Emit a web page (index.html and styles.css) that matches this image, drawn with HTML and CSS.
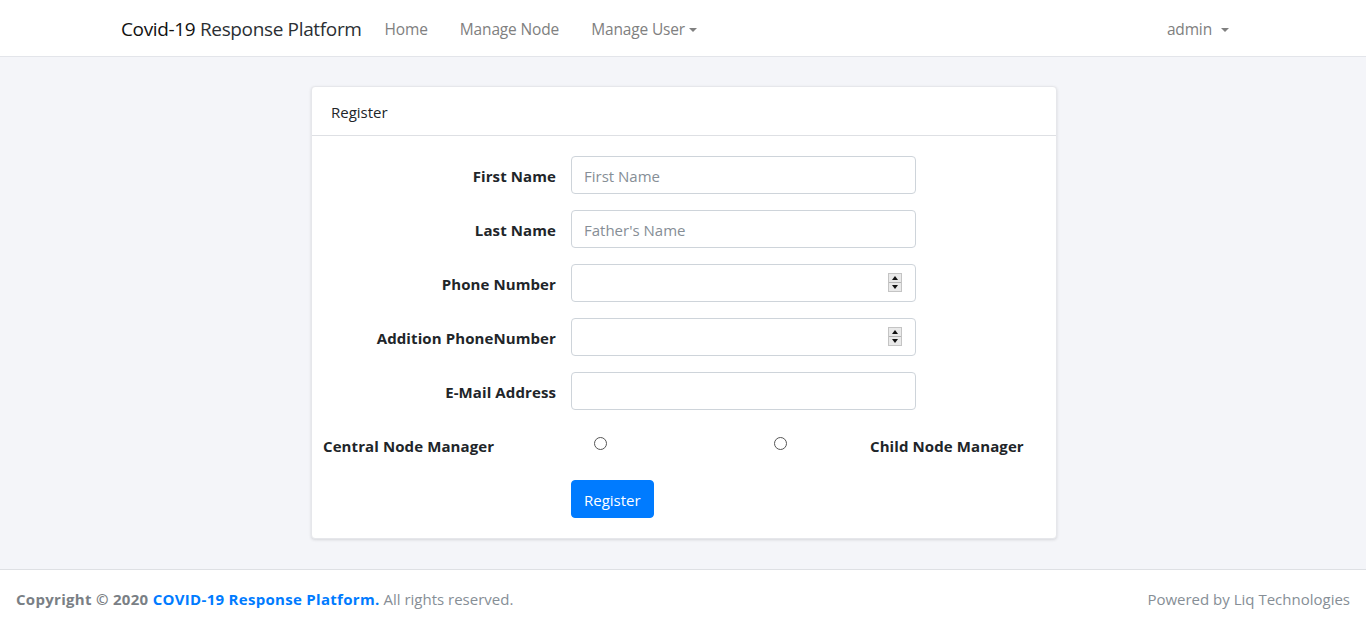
FILE: index.html
```html
<!DOCTYPE html>
<html lang="en">
<head>
<meta charset="utf-8">
<title>Covid-19 Response Platform</title>
<link rel="stylesheet" href="styles.css">
</head>
<body>
<div class="app">
  <nav class="navbar">
    <div class="nav-left">
      <a class="brand" href="#"><span class="brand-strong">Covid-19</span> Response Platform</a>
      <ul class="nav-links">
        <li><a class="nav-link" href="#">Home</a></li>
        <li><a class="nav-link" href="#">Manage Node</a></li>
        <li><a class="nav-link dropdown" href="#">Manage User</a></li>
      </ul>
    </div>
    <ul class="nav-links">
      <li><a class="nav-link dropdown user" href="#">admin</a></li>
    </ul>
  </nav>

  <main class="main">
    <div class="card">
      <div class="card-header">Register</div>
      <div class="card-body">
        <form class="form">
          <div class="form-row">
            <label class="label" for="fn">First Name</label>
            <input class="input" id="fn" type="text" placeholder="First Name">
          </div>
          <div class="form-row">
            <label class="label" for="ln">Last Name</label>
            <input class="input" id="ln" type="text" placeholder="Father's Name">
          </div>
          <div class="form-row">
            <label class="label" for="ph">Phone Number</label>
            <div class="num-wrap">
              <input class="input" id="ph" type="text">
              <span class="spinner"><span class="spin up"></span><span class="spin down"></span></span>
            </div>
          </div>
          <div class="form-row">
            <label class="label" for="ph2">Addition PhoneNumber</label>
            <div class="num-wrap">
              <input class="input" id="ph2" type="text">
              <span class="spinner"><span class="spin up"></span><span class="spin down"></span></span>
            </div>
          </div>
          <div class="form-row">
            <label class="label" for="em">E-Mail Address</label>
            <input class="input" id="em" type="email">
          </div>
          <div class="radio-row">
            <span class="label-b">Central Node Manager</span>
            <span class="radio-cell"><span class="radio"></span></span>
            <span class="radio-cell"><span class="radio"></span></span>
            <span class="label-b">Child Node Manager</span>
          </div>
          <div class="btn-row">
            <button class="btn" type="button">Register</button>
          </div>
        </form>
      </div>
    </div>
  </main>

  <footer class="footer">
    <div class="copy"><strong>Copyright © 2020 <a class="flink" href="#">COVID-19 Response Platform.</a></strong> All rights reserved.</div>
    <div class="powered">Powered by Liq Technologies</div>
  </footer>
</div>
</body>
</html>
```
FILE: styles.css
```css
* { box-sizing: border-box; }
html, body { margin: 0; padding: 0; height: 100%; }
body {
  font-family: "Open Sans", "Noto Sans", sans-serif;
  font-size: 15px;
  color: #212529;
  background: #f4f5f9;
}
a { text-decoration: none; }
ul { list-style: none; margin: 0; padding: 0; }
.app { min-height: 100%; display: flex; flex-direction: column; }

.navbar {
  height: 57px;
  background: #fff;
  border-bottom: 1px solid #e3e5ea;
  display: flex;
  align-items: center;
  justify-content: space-between;
  padding: 1px 129px 0 121px;
}
.nav-left { display: flex; align-items: center; }
.brand { font-size: 19px; color: #2b2f33; margin-right: 15px; letter-spacing: -0.35px; }
.brand-strong { color: #111; }
.nav-links { display: flex; }
.nav-link { display: block; padding: 8px 16px; color: #808080; font-size: 15.5px; letter-spacing: -0.15px; }
.nav-links li:first-child .nav-link { padding-left: 8px; }
.dropdown::after {
  content: "";
  display: inline-block;
  margin-left: 4px;
  vertical-align: 3px;
  border-top: 4.5px solid #808080;
  border-left: 4px solid transparent;
  border-right: 4px solid transparent;
}
.user { padding-right: 8px; }
.user::after { margin-left: 9px; }

.main { flex: 1; padding: 29px 0 30px; display: flex; justify-content: center; }
.card {
  width: 746px;
  margin-left: 2px;
  background: #fff;
  border: 1px solid #e6e7eb;
  border-radius: 4px;
  box-shadow: 0 1px 3px rgba(0,0,0,.12);
}
.card-header {
  height: 49px;
  padding: 1px 19px 0;
  display: flex;
  align-items: center;
  border-bottom: 1px solid #dee0e4;
  font-size: 15px;
}
.card-body { padding: 20px 20px 19px 19px; }
.form { display: flex; flex-direction: column; gap: 16px; }
.form-row { display: grid; grid-template-columns: 225px 345px; column-gap: 15px; align-items: center; }
.label { text-align: right; font-weight: 700; font-size: 15px; letter-spacing: 0.1px; padding-top: 2px; }
.input {
  width: 345px;
  height: 38px;
  border: 1px solid #ced4da;
  border-radius: 4px;
  padding: 1px 12px 0;
  font-family: inherit;
  font-size: 15px;
  color: #495057;
  background: #fff;
  outline: none;
}
.input::placeholder { color: #868e96; }
.num-wrap { position: relative; width: 345px; height: 38px; }
.spinner {
  position: absolute;
  left: 317px;
  top: 9px;
  width: 14px;
  height: 19px;
  display: flex;
  flex-direction: column;
  border: 1px solid #c4c4c4;
  background: #e9e9e9;
}
.spin { flex: 1; display: flex; align-items: center; justify-content: center; }
.spin.up { border-bottom: 1px solid #b4b4b4; }
.spin.up::before { content: ""; border-bottom: 4px solid #111; border-left: 3.5px solid transparent; border-right: 3.5px solid transparent; }
.spin.down::before { content: ""; border-top: 4px solid #111; border-left: 3.5px solid transparent; border-right: 3.5px solid transparent; }

.radio-row {
  display: grid;
  grid-template-columns: 271px 180px 96px auto;
  align-items: center;
  margin-left: -8px;
  height: 38px;
}
.label-b { font-weight: 700; font-size: 15px; letter-spacing: 0.1px; padding-top: 2px; }
.radio-cell { display: flex; align-items: center; height: 13px; margin-top: -4px; }
.radio {
  width: 13px; height: 13px;
  border: 1px solid #555;
  border-radius: 50%;
  background: #fff;
}
.btn-row { padding-left: 240px; }
.btn {
  height: 38px;
  padding: 1px 12px 0;
  background: #007bff;
  color: #fff;
  border: 1px solid #007bff;
  border-radius: 4px;
  font-family: inherit;
  font-size: 15px;
}

.footer {
  height: 57px;
  background: #fff;
  border-top: 1px solid #dee0e4;
  display: flex;
  align-items: center;
  justify-content: space-between;
  padding: 1px 16px 0;
  color: #868e96;
  font-size: 15px;
}
.footer strong { color: #7a7f85; letter-spacing: 0.3px; }
.flink { color: #007bff; }
```
